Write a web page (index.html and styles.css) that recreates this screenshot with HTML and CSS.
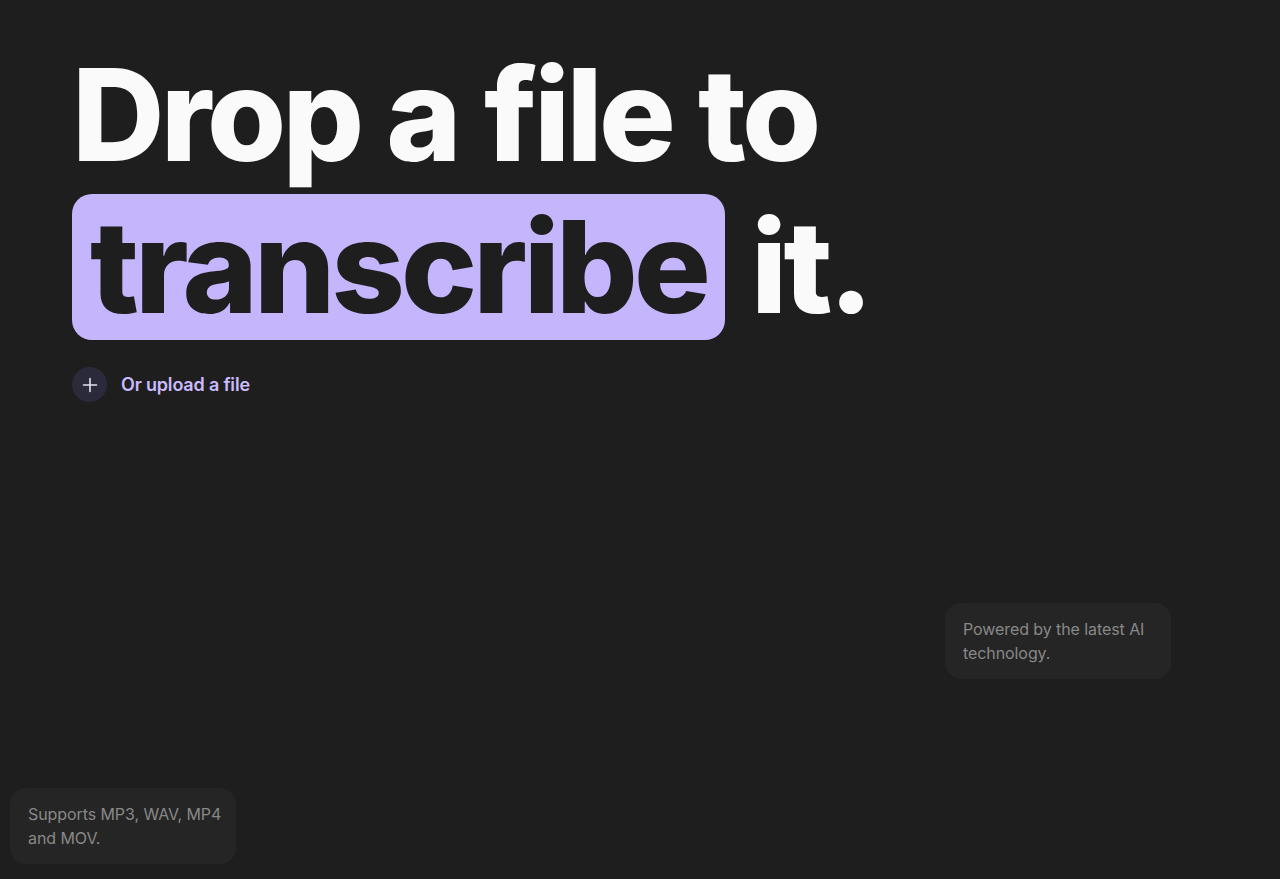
FILE: index.html
```html
<!DOCTYPE html>
<html lang="en">
<head>
<meta charset="utf-8">
<title>Drop a file to transcribe it</title>
<link rel="stylesheet" href="styles.css">
</head>
<body>
<main class="page">
  <h1 class="headline">
    <span class="line">Drop a file to</span>
    <span class="line"><span class="mark">transcribe</span> it.</span>
  </h1>
  <button class="upload" type="button">
    <span class="upload-icon">
      <svg width="16" height="16" viewBox="0 0 16 16" fill="none" stroke="currentColor" stroke-width="1.6" stroke-linecap="round"><path d="M8 1.5v13M1.5 8h13"/></svg>
    </span>
    <span class="upload-label">Or upload a file</span>
  </button>
  <div class="note note-ai">Powered by the latest AI technology.</div>
  <div class="note note-formats">Supports MP3, WAV, MP4 and MOV.</div>
</main>
</body>
</html>
```
FILE: styles.css
```css
html, body {
  margin: 0;
  padding: 0;
  height: 100%;
}
body {
  background: #1e1e1e;
  font-family: Inter, "Liberation Sans", sans-serif;
  overflow: hidden;
}
.page {
  position: relative;
  height: 879px;
  padding: 39px 72px 0;
  box-sizing: border-box;
}
.headline {
  margin: 0;
  font-size: 128px;
  font-weight: 800;
  line-height: 152px;
  letter-spacing: -0.03em;
  word-spacing: 2px;
  color: #fafafa;
}
.line {
  display: block;
  white-space: nowrap;
}
.mark {
  display: inline-block;
  background: #c4b5fd;
  color: #1e1e1e;
  border-radius: 20px;
  padding: 0 18px;
  line-height: 146px;
}
.upload {
  display: flex;
  align-items: center;
  gap: 14px;
  margin-top: 24px;
  padding: 0;
  border: 0;
  background: none;
  cursor: pointer;
  font-family: inherit;
}
.upload-icon {
  width: 35px;
  height: 35px;
  border-radius: 50%;
  background: #2b2a3a;
  color: #e4e0f5;
  display: flex;
  align-items: center;
  justify-content: center;
}
.upload-label {
  font-size: 18px;
  font-weight: 600;
  color: #c9bbfd;
  letter-spacing: -0.01em;
}
.note {
  position: absolute;
  width: 226px;
  box-sizing: border-box;
  padding: 14px 10px 14px 18px;
  border-radius: 16px;
  background: #252525;
  color: #888888;
  font-size: 16px;
  line-height: 24px;
  letter-spacing: -0.005em;
}
.note-ai {
  left: 945px;
  top: 603px;
}
.note-formats {
  left: 10px;
  top: 788px;
}
```
